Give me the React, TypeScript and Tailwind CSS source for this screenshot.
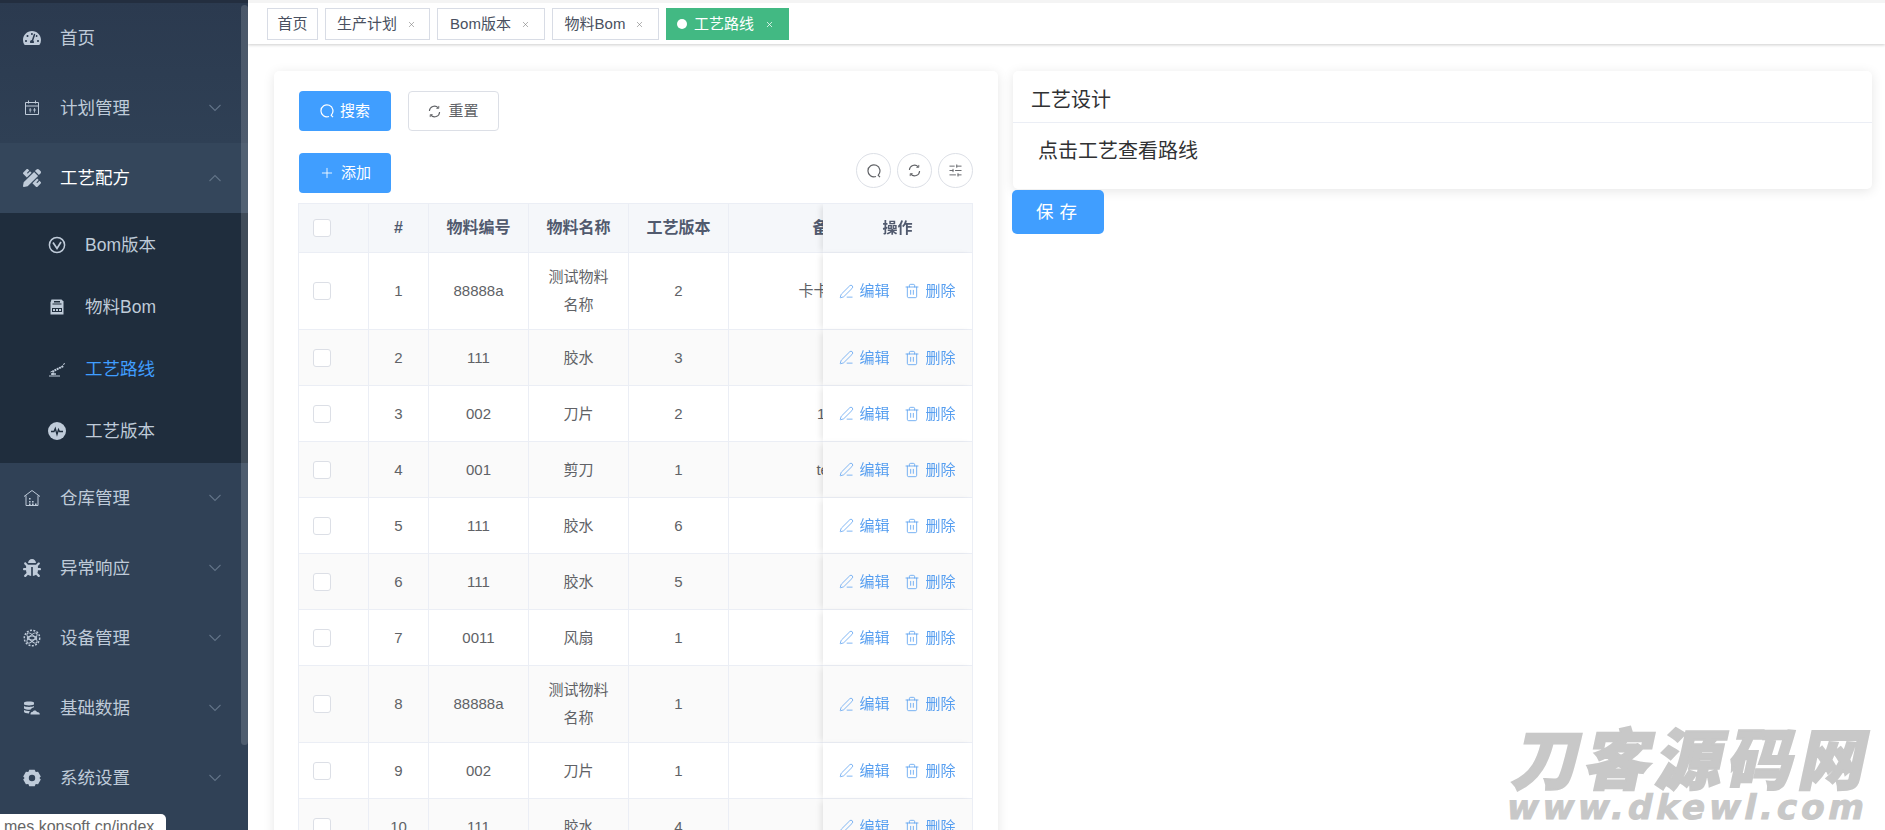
import React from "react";
import { Plus, X, SlidersHorizontal, PenLine, Trash2 } from "lucide-react";
import { FaTachometerAlt, FaPencilRuler, FaBug } from "react-icons/fa";

// Small hand drawn icons for the ones the packages don't have
const CalendarIcon = () => (
  <svg width="18" height="18" viewBox="0 0 18 18" fill="none" stroke="currentColor" strokeWidth="1">
    <path d="M2.5 3.5h13v12h-13z" />
    <path d="M2.5 7h13M5.5 1.5v3M12.5 1.5v3M7.5 3.5h3" />
    <path d="M6 11h2.5M7.2 9v4.5M10 11h3M11.5 9v4.5" strokeWidth="0.8" />
  </svg>
);

const VersionIcon = () => (
  <svg width="18" height="18" viewBox="0 0 18 18" fill="none" stroke="currentColor" strokeWidth="1.5">
    <circle cx="9" cy="9" r="7.6" />
    <path d="M5 6.5l4 6 4-6.5" strokeWidth="1.7" />
  </svg>
);

const BomIcon = () => (
  <svg width="18" height="18" viewBox="0 0 18 18">
    <path d="M3.5 1.5h10l2 2v13h-13v-12z" fill="currentColor" />
    <path d="M6 3h6v1.500H6zM4.500 5.500h9v1H4.500z" fill="#1f2d3d" />
    <path d="M4 10h10v4H4z" fill="#1f2d3d" />
    <path d="M5 11h2v2H5zM8 11h2v2H8zM11 11h2v2h-2z" fill="currentColor" />
  </svg>
);

const RobotArmIcon = () => (
  <svg width="18" height="18" viewBox="0 0 18 18" fill="none" stroke="currentColor">
    <path d="M1 16h11" strokeWidth="1" />
    <path d="M4.5 15l1-4 10-5" strokeWidth="2" strokeDasharray="2 0.6" />
    <path d="M5 11l-2.5 1M15 4.5l2 -1" strokeWidth="1" />
    <path d="M3 14h5" strokeWidth="1.5" />
  </svg>
);

const PulseIcon = () => (
  <svg width="18" height="18" viewBox="0 0 18 18">
    <circle cx="9" cy="9" r="9" fill="currentColor" />
    <path d="M3 9.5h3l1.3-3 1.7 6 1.5-5 1 2h3.5" fill="none" stroke="#1f2d3d" strokeWidth="1.3" />
  </svg>
);

const WarehouseIcon = () => (
  <svg width="18" height="18" viewBox="0 0 18 18" fill="none" stroke="currentColor" strokeWidth="1">
    <path d="M1 7.5L9 1.5l8 6" />
    <path d="M3 6.5v10h12v-10" />
    <path d="M6 9h1.6v1.5H6zM6 12h1.6v1.5H6zM9 12h1.6v1.5H9zM6 14.5h1.6V16H6zM9 14.5h1.6V16H9zM12 14.5h1.6V16H12z" fill="currentColor" stroke="none" />
  </svg>
);

const DeviceIcon = () => (
  <svg width="18" height="18" viewBox="0 0 18 18" fill="none" stroke="currentColor" strokeWidth="1">
    <circle cx="9" cy="9" r="7.7" strokeDasharray="2 1.4" strokeWidth="1.5" />
    <ellipse cx="9" cy="9" rx="6.5" ry="2.6" transform="rotate(45 9 9)" />
    <ellipse cx="9" cy="9" rx="6.5" ry="2.6" transform="rotate(-45 9 9)" />
    <ellipse cx="9" cy="9" rx="5" ry="2" />
  </svg>
);

const DataIcon = () => (
  <svg width="18" height="18" viewBox="0 0 18 18" fill="currentColor">
    <path d="M1 3.5C1 2 11 2 11 3.5v1.8C11 6.8 1 6.8 1 5.3z" />
    <path d="M1 7c2 1.2 8 1.2 10 0v1.2c-2 .3-3 1.5-3.2 2.4-2.8.2-5.6-.3-6.8-1.2z" />
    <path d="M1 11c1.5.8 3.5 1.1 6 1.1-.6.6-1 1.5-1 2.4-2.400-.1-5-.8-5-1.800z" />
    <path d="M7.500 15.500c-.3-1.600 1-2.800 2.300-2.700.5-1.800 3.700-1.800 4.200.3 1.400 0 2.800.8 2.800 2.400z" />
  </svg>
);

const GearIcon = () => (
  <svg width="18" height="18" viewBox="0 0 18 18">
    <path
      fillRule="evenodd"
      fill="currentColor"
      d="M6.300 0.800h5.400l1 2.200 2.400-.2 2.700 4.600-1.400 1.600 1.400 1.600-2.700 4.600-2.400-.2-1 2.200H6.300l-1-2.200-2.400.2L.2 10.600l1.400-1.600L.2 7.400l2.700-4.600 2.400.2zM9 5.800a3.200 3.200 0 100 6.400 3.200 3.200 0 000-6.400z"
    />
  </svg>
);

const Chevron = ({ up }: { up?: boolean }) => (
  <svg width="14" height="8" viewBox="0 0 14 8" fill="none" stroke="#627387" strokeWidth="1.1">
    <path d={up ? "M1.500 7L7 1.500 12.500 7" : "M1.500 1L7 6.500 12.500 1"} />
  </svg>
);

const SearchIcon = ({ size = 14 }: { size?: number }) => (
  <svg width={size} height={size} viewBox="0 0 14 14" fill="none" stroke="currentColor" strokeWidth="1.2">
    <path d="M11.300 11A6 6 0 1 0 9 12.500" />
    <path d="M10.800 10.800l2.200 2.400" />
  </svg>
);

const RefreshIcon = ({ size = 13 }: { size?: number }) => (
  <svg width={size} height={size} viewBox="0 0 14 14" fill="none" stroke="currentColor" strokeWidth="1.2">
    <path d="M1.500 6.500A5.500 5.500 0 0 1 11 3" />
    <path d="M12.500 7.500A5.500 5.500 0 0 1 3 11" />
    <path d="M11.600 1v2.600H9M2.400 13v-2.600H5" strokeWidth="1" />
  </svg>
);

const MenuRow = ({
  icon,
  label,
  arrow,
  active,
}: {
  icon: React.ReactNode;
  label: string;
  arrow?: "up" | "down";
  active?: boolean;
}) => (
  <div className={`flex h-[70px] items-center pl-[23px] pr-[26px] ${active ? "bg-[#34465b] text-white" : "text-[#bfcbd9]"}`}>
    <span className="flex w-[18px] justify-center text-[#bfcbd9]">{icon}</span>
    <span className="ml-[19px] flex-1 text-[17.500px]">{label}</span>
    {arrow && <Chevron up={arrow === "up"} />}
  </div>
);

const SubRow = ({ icon, label, active }: { icon: React.ReactNode; label: string; active?: boolean }) => (
  <div className={`flex h-[62px] items-center pl-[48px] text-[17.500px] ${active ? "text-[#409eff]" : "text-[#bfcbd9]"}`}>
    <span className="flex w-[18px] justify-center text-[#bfcbd9]">{icon}</span>
    <span className="ml-[19px]">{label}</span>
  </div>
);

const Sidebar = () => (
  <aside className="relative h-full w-[248px] shrink-0 overflow-hidden bg-[#304156]">
    <div className="h-[4px] bg-[#232e3f]" />
    <div className="-mt-px bg-linear-to-b from-[#2b3a4f] to-[#2f4055]">
      <MenuRow icon={<FaTachometerAlt size={18} />} label="首页" />
      <MenuRow icon={<CalendarIcon />} label="计划管理" arrow="down" />
    </div>
    <MenuRow icon={<FaPencilRuler size={18} />} label="工艺配方" arrow="up" active />
    <div className="bg-[#1f2d3d] py-px">
      <SubRow icon={<VersionIcon />} label="Bom版本" />
      <SubRow icon={<BomIcon />} label="物料Bom" />
      <SubRow icon={<RobotArmIcon />} label="工艺路线" active />
      <SubRow icon={<PulseIcon />} label="工艺版本" />
    </div>
    <MenuRow icon={<WarehouseIcon />} label="仓库管理" arrow="down" />
    <MenuRow icon={<FaBug size={18} />} label="异常响应" arrow="down" />
    <MenuRow icon={<DeviceIcon />} label="设备管理" arrow="down" />
    <MenuRow icon={<DataIcon />} label="基础数据" arrow="down" />
    <MenuRow icon={<GearIcon />} label="系统设置" arrow="down" />
    {/* scrollbar thumb */}
    <div className="absolute top-[5px] right-0 h-[740px] w-[7px] rounded-sm bg-white/15" />
  </aside>
);

const tags = [
  { name: "首页", w: "w-[51px]", closable: false },
  { name: "生产计划", w: "w-[105px]", closable: true },
  { name: "Bom版本", w: "w-[108px]", closable: true },
  { name: "物料Bom", w: "w-[107px]", closable: true },
];

const TagsBar = () => (
  <div className="flex h-[44px] shrink-0 items-start gap-[7px] border-t-[3px] border-[#f4f4f4] bg-white pt-[5px] pl-[19px] shadow-[0_1px_3px_rgba(0,0,0,0.2)]">
    {tags.map((t) => (
      <div
        key={t.name}
        className={`flex h-[32px] ${t.w} items-center justify-center border border-[#d8dce5] text-[15px] text-[#495060] ${t.closable ? "pr-[2px]" : ""}`}
      >
        {t.name}
        {t.closable && <X size={9} strokeWidth={1.5} className="ml-[10px] text-[#777]" />}
      </div>
    ))}
    <div className="flex h-[32px] w-[123px] items-center justify-center bg-[#42b983] pr-[4px] text-[15px] text-white">
      <span className="mr-[7px] h-[10px] w-[10px] rounded-full bg-white" />
      工艺路线
      <X size={9} strokeWidth={2} className="ml-[11px]" />
    </div>
  </div>
);

const rows = [
  { no: 1, code: "88888a", name: ["测试物料", "名称"], ver: 2, note: "卡卡卡卡" },
  { no: 2, code: "111", name: ["胶水"], ver: 3, note: "" },
  { no: 3, code: "002", name: ["刀片"], ver: 2, note: "111" },
  { no: 4, code: "001", name: ["剪刀"], ver: 1, note: "test" },
  { no: 5, code: "111", name: ["胶水"], ver: 6, note: "" },
  { no: 6, code: "111", name: ["胶水"], ver: 5, note: "" },
  { no: 7, code: "0011", name: ["风扇"], ver: 1, note: "" },
  { no: 8, code: "88888a", name: ["测试物料", "名称"], ver: 1, note: "" },
  { no: 9, code: "002", name: ["刀片"], ver: 1, note: "" },
  { no: 10, code: "111", name: ["胶水"], ver: 4, note: "" },
];

const Checkbox = () => <span className="block h-[18px] w-[18px] rounded-[3px] border border-[#dcdfe6] bg-white" />;

const RoundBtn = ({ children }: { children: React.ReactNode }) => (
  <button className="flex h-[35px] w-[35px] items-center justify-center rounded-full border border-[#dcdfe6] text-[#606266]">
    {children}
  </button>
);

const headCell = "border-r border-b border-[#ebeef5] bg-[#f5f7fa] text-center font-bold text-[#515a6e]";
const bodyCell = "border-r border-b border-[#ebeef5] p-0 text-center text-[15px] leading-[28px] text-[#606266]";

const TableCard = () => (
  <div className="h-[800px] w-[724px] shrink-0 rounded-[5px] bg-white px-[25px] pt-5 shadow-[0_2px_12px_0_rgba(0,0,0,0.1)]">
    <div className="flex gap-[17px]">
      <button className="flex h-10 w-[92px] items-center justify-center gap-[6px] rounded-[4px] bg-[#409eff] text-[15px] text-white">
        <SearchIcon />
        搜索
      </button>
      <button className="flex h-10 w-[91px] items-center justify-center gap-[7px] rounded-[4px] border border-[#dcdfe6] bg-white text-[15px] text-[#606266]">
        <RefreshIcon />
        重置
      </button>
    </div>
    <div className="mt-[22px] flex items-start justify-between">
      <button className="flex h-10 w-[92px] items-center justify-center gap-[6px] rounded-[4px] bg-[#409eff] text-[15px] text-white">
        <Plus size={16} strokeWidth={1.3} />
        添加
      </button>
      <div className="flex gap-[6px]">
        <RoundBtn>
          <SearchIcon />
        </RoundBtn>
        <RoundBtn>
          <RefreshIcon />
        </RoundBtn>
        <RoundBtn>
          <SlidersHorizontal size={15} strokeWidth={1.5} />
        </RoundBtn>
      </div>
    </div>
    <div className="mt-[10px] -ml-px overflow-hidden border-t border-l border-[#ebeef5]">
      <table className="w-[780px] table-fixed border-separate border-spacing-0">
        <colgroup>
          <col className="w-[70px]" />
          <col className="w-[60px]" />
          <col className="w-[100px]" />
          <col className="w-[100px]" />
          <col className="w-[100px]" />
          <col className="w-[200px]" />
          <col className="w-[150px]" />
        </colgroup>
        <thead>
          <tr className="h-[49px]">
            <th className={`${headCell} pl-[14px]`}>
              <Checkbox />
            </th>
            <th className={`${headCell} text-[16px]`}>#</th>
            <th className={`${headCell} text-[16px]`}>物料编号</th>
            <th className={`${headCell} text-[16px]`}>物料名称</th>
            <th className={`${headCell} text-[16px]`}>工艺版本</th>
            <th className={`${headCell} text-[16px]`}>备注</th>
            <th className={`${headCell} sticky right-0 text-[15px] shadow-[-4px_0_6px_-2px_rgba(0,0,0,0.1)]`}>操作</th>
          </tr>
        </thead>
        <tbody>
          {rows.map((r) => {
            const stripe = r.no % 2 === 0 ? "bg-[#fafafa]" : "bg-white";
            return (
              <tr key={r.no} className={r.name.length > 1 ? "h-[77px]" : "h-[56px]"}>
                <td className={`${bodyCell} ${stripe} pl-[14px]`}>
                  <Checkbox />
                </td>
                <td className={`${bodyCell} ${stripe}`}>{r.no}</td>
                <td className={`${bodyCell} ${stripe}`}>{r.code}</td>
                <td className={`${bodyCell} ${stripe}`}>
                  {r.name.map((n) => (
                    <div key={n}>{n}</div>
                  ))}
                </td>
                <td className={`${bodyCell} ${stripe}`}>{r.ver}</td>
                <td className={`${bodyCell} ${stripe}`}>{r.note}</td>
                <td className={`${bodyCell} ${stripe} sticky right-0 shadow-[-4px_0_6px_-2px_rgba(0,0,0,0.1)]`}>
                  <div className="flex items-center justify-center text-[#569ef0]">
                    <PenLine size={15} strokeWidth={1.2} />
                    <span className="ml-[5px]">编辑</span>
                    <Trash2 size={16} strokeWidth={1.2} className="ml-[14px]" />
                    <span className="ml-[6px]">删除</span>
                  </div>
                </td>
              </tr>
            );
          })}
        </tbody>
      </table>
    </div>
  </div>
);

const DesignPanel = () => (
  <div className="flex-1">
    <div className="h-[118px] rounded-[5px] bg-white shadow-[0_2px_12px_0_rgba(0,0,0,0.1)]">
      <div className="flex h-[52px] items-center border-b border-[#ebeef5] pt-[6px] pl-[18px] text-[20px] text-[#303133]">工艺设计</div>
      <div className="pt-[13px] pl-[25px] text-[20px] leading-[30px] text-[#303133]">点击工艺查看路线</div>
    </div>
    <button className="mt-px -ml-px h-[44px] w-[92px] rounded-[5px] bg-[#409eff] pl-[3px] text-[17.500px] tracking-[6px] text-white">保存</button>
  </div>
);

export default function App() {
  return (
    <div className="relative flex h-[830px] w-[1885px] overflow-hidden bg-white font-['Liberation_Sans','Noto_Sans_CJK_SC',sans-serif]">
      <Sidebar />
      <main className="flex min-w-0 flex-1 flex-col">
        <TagsBar />
        <div className="flex gap-[15px] pt-[27px] pr-[13px] pl-[26px]">
          <TableCard />
          <DesignPanel />
        </div>
      </main>

      {/* browser status bubble */}
      <div className="absolute bottom-0 left-0 h-4 w-[166px] overflow-hidden rounded-tr-[5px] bg-white pl-1 text-[16px] leading-[26px] whitespace-nowrap text-[#666]">
        mes.konsoft.cn/index
      </div>

      {/* site watermark */}
      <div className="pointer-events-none absolute top-[731px] left-[1512px] w-[360px] -skew-x-12 text-[#c8c8c8]">
        <div className="h-[61px] text-[66px] leading-[61px] font-black tracking-[5.500px] whitespace-nowrap [-webkit-text-stroke:2px_#c8c8c8]">刀客源码网</div>
        <div className="pl-[2px] font-['DejaVu_Sans',sans-serif] text-[34px] leading-[30px] font-bold tracking-[4px] whitespace-nowrap [-webkit-text-stroke:1px_#c8c8c8]">www.dkewl.com</div>
      </div>
    </div>
  );
}
